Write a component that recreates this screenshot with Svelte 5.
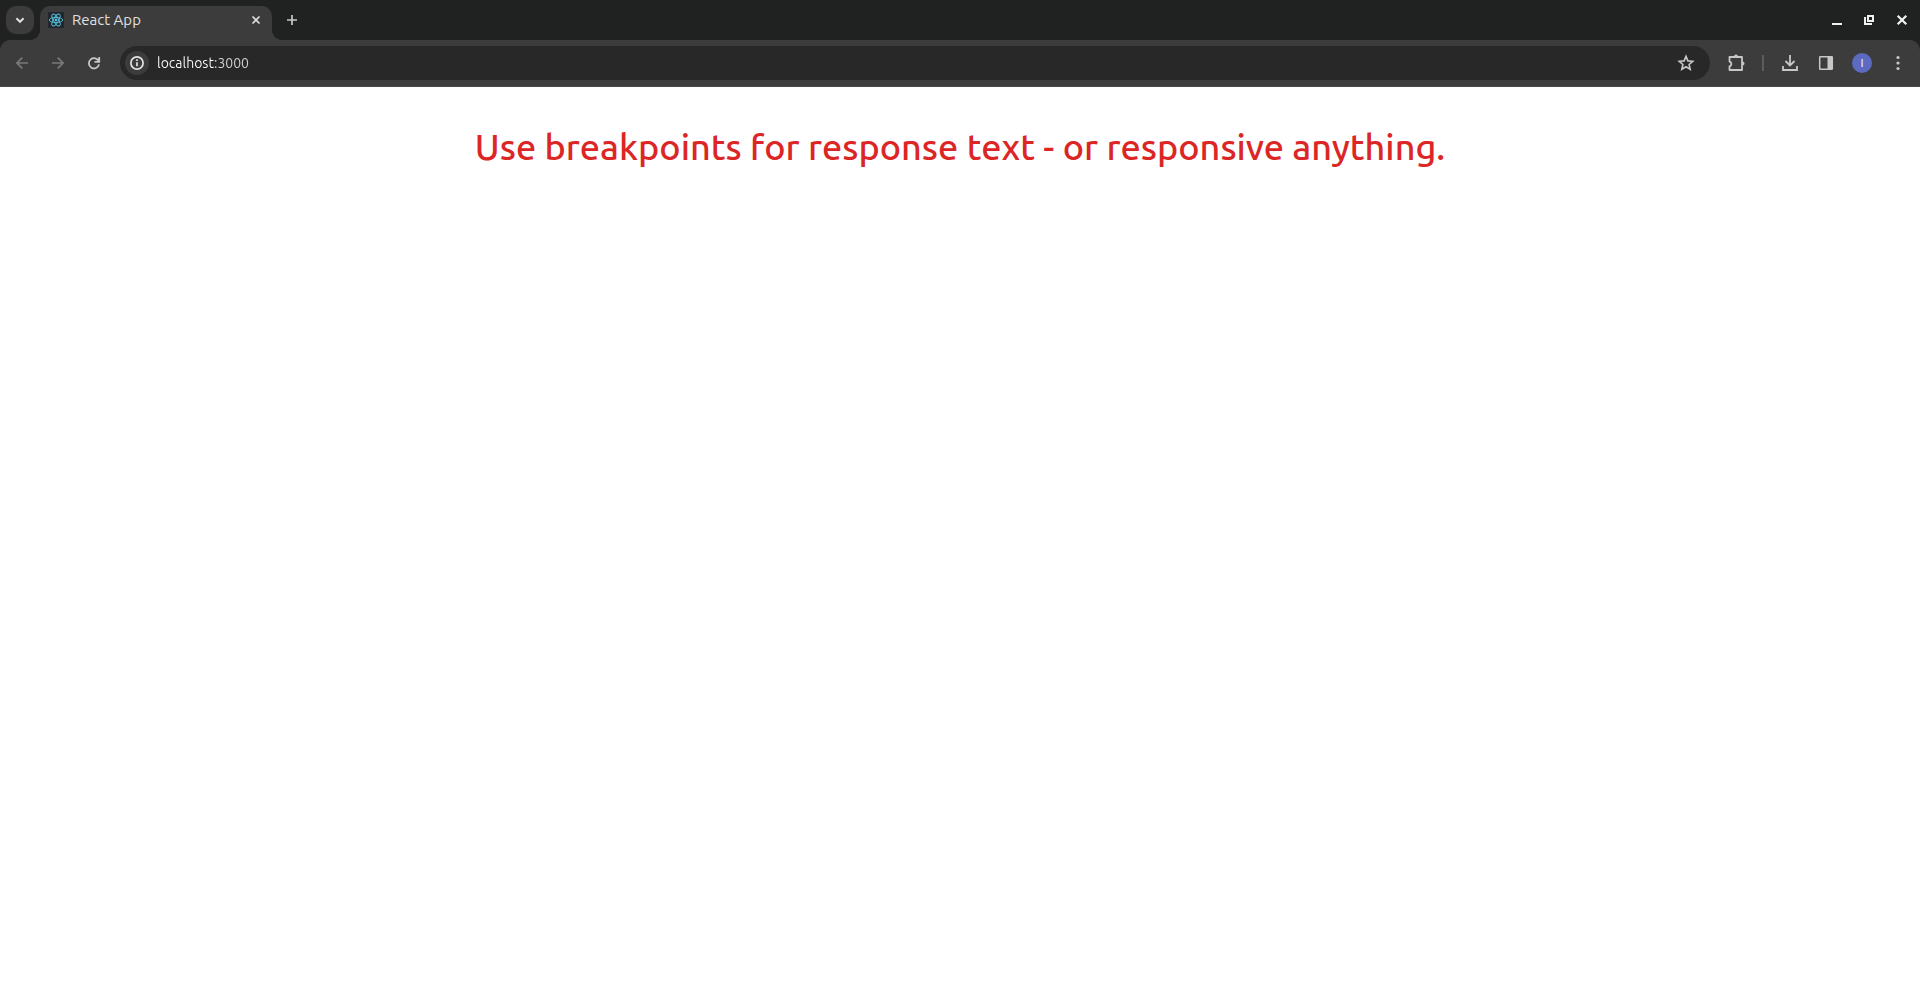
<script>
  let address = $state('localhost:3000');
</script>

<div class="browser">
  <header>
    <div class="strip">
      <button class="search" aria-label="Search tabs">
        <svg width="10" height="10" viewBox="0 0 10 10"><path d="M1.4 3.2 5 6.8 8.6 3.2" stroke-width="2" /></svg>
      </button>
      <div class="tab">
        <svg class="react" width="16" height="16" viewBox="0 0 16 16">
          <rect width="16" height="16" rx="1" fill="#20262c" />
          <g fill="none" stroke="#56bfdd" stroke-width=".9">
            <ellipse cx="8" cy="8" rx="6.7" ry="2.6" />
            <ellipse cx="8" cy="8" rx="6.7" ry="2.6" transform="rotate(60 8 8)" />
            <ellipse cx="8" cy="8" rx="6.7" ry="2.6" transform="rotate(120 8 8)" />
          </g>
          <circle cx="8" cy="8" r="1.4" fill="#56bfdd" />
        </svg>
        <span class="title">React App</span>
        <button class="close" aria-label="Close tab">
          <svg width="16" height="16" viewBox="0 0 16 16"><path d="m4.5 4.5 7 7m0-7-7 7" stroke-width="1.7" /></svg>
        </button>
      </div>
      <button class="new" aria-label="New tab">
        <svg width="16" height="16" viewBox="0 0 16 16"><path d="M8 3v10M3 8h10" stroke="#c7c7c7" stroke-width="1.7" /></svg>
      </button>
      <div class="window">
        <button aria-label="Minimize">
          <svg width="16" height="16" viewBox="0 0 16 16"><path d="M4 12h10" stroke="#f1f1f1" stroke-width="2" /></svg>
        </button>
        <button aria-label="Restore">
          <svg width="16" height="16" viewBox="0 0 16 16"><path d="M7 4h5v5H7zM4 5v7h7" stroke="#f1f1f1" stroke-width="2" /></svg>
        </button>
        <button aria-label="Close window">
          <svg width="16" height="16" viewBox="0 0 16 16"><path d="m3.7 3.7 8.6 8.6m0-8.6-8.6 8.6" stroke="#f1f1f1" stroke-width="2.2" /></svg>
        </button>
      </div>
    </div>

    <div class="toolbar">
      <button class="dim" aria-label="Back">
        <svg width="16" height="16" viewBox="0 0 16 16"><path d="M14 8H3m5.3-5.4L2.9 8l5.4 5.4" stroke-width="1.7" /></svg>
      </button>
      <button class="dim" aria-label="Forward">
        <svg width="16" height="16" viewBox="0 0 16 16"><path d="M2 8h11M7.700 2.600 13.100 8l-5.400 5.400" stroke-width="1.700" /></svg>
      </button>
      <button aria-label="Reload">
        <svg width="16" height="16" viewBox="0 0 16 16"><path d="M12.800 6.600A5.100 5.100 0 1 0 13 9.300M13.200 2v4.800H8.500" stroke-width="1.800" /></svg>
      </button>
      <div class="address">
        <button class="info" aria-label="View site information">
          <svg width="16" height="16" viewBox="0 0 16 16"><circle cx="8" cy="8" r="6.100" stroke-width="1.700" /><path d="M8 7.300v4M8 4.300v1.700" stroke-width="1.700" /></svg>
        </button>
        <input aria-label="Address and search bar" bind:value={address} />
        <button aria-label="Bookmark this tab">
          <svg width="18" height="18" viewBox="0 0 18 18"><path d="m9 2.400 1.900 4.500 4.900.4-3.700 3.200 1.100 4.800L9 12.700l-4.200 2.600 1.100-4.800-3.700-3.200 4.900-.4z" stroke-width="1.600" /></svg>
        </button>
      </div>
      <button class="extensions" aria-label="Extensions">
        <svg width="20" height="20" viewBox="0 0 20 20"><path d="M3.500 4h12.500v13h-12.500v-3.500c2.500-.6 2.500-4.400 0-5z" stroke-width="1.800" stroke-linejoin="round" /><path d="M8 3.500a2 2 0 0 1 4 0zM16.500 8.500a2 2 0 0 1 0 4z" fill="#c7c7c7" stroke="none" /></svg>
      </button>
      <span class="rule"></span>
      <button aria-label="Downloads">
        <svg width="20" height="20" viewBox="0 0 20 20"><path d="M10 2v10M5.500 8 10 12.500 14.500 8M3 13v4h14v-4" stroke-width="1.800" /></svg>
      </button>
      <button aria-label="Side panel">
        <svg width="16" height="16" viewBox="0 0 16 16"><rect x="1.700" y="1.700" width="12.600" height="12.600" rx=".7" stroke-width="1.500" /><path d="M9.500 1.500h5v13h-5z" fill="#c7c7c7" stroke="none" /></svg>
      </button>
      <button aria-label="Profile"><span class="avatar">I</span></button>
      <button aria-label="Menu">
        <svg width="16" height="16" viewBox="0 0 16 16"><g fill="#c7c7c7" stroke="none"><circle cx="8" cy="2.500" r="1.600" /><circle cx="8" cy="8" r="1.600" /><circle cx="8" cy="13.500" r="1.600" /></g></svg>
      </button>
    </div>
  </header>

  <main>
    <p>Use breakpoints for response text - or responsive anything.</p>
  </main>
</div>

<style>
  :global(body) {
    margin: 0;
    background: #fff;
  }
  .browser {
    min-height: 100vh;
    font-family: Ubuntu, "Noto Sans", sans-serif;
  }
  header {
    background: #202221;
  }
  button {
    display: flex;
    flex: none;
    align-items: center;
    justify-content: center;
    padding: 0;
    border: 0;
    background: none;
    font: inherit;
  }
  svg {
    display: block;
    flex: none;
    fill: none;
    stroke: #dedede;
  }
  .strip {
    display: flex;
    align-items: center;
    height: 40px;
    padding-left: 6px;
  }
  .search {
    width: 28px;
    height: 28px;
    border-radius: 10px;
    background: #3c3c3c;
  }
  .tab {
    position: relative;
    display: flex;
    align-items: center;
    align-self: flex-end;
    box-sizing: border-box;
    width: 232px;
    height: 34px;
    margin-left: 6px;
    padding: 0 8px 6px;
    border-radius: 10px 10px 0 0;
    background: #3c3c3c;
  }
  .tab::before,
  .tab::after {
    content: "";
    position: absolute;
    bottom: 0;
    width: 10px;
    height: 10px;
  }
  .tab::before {
    right: 100%;
    background: radial-gradient(circle at 0 0, transparent 10px, #3c3c3c 10px);
  }
  .tab::after {
    left: 100%;
    background: radial-gradient(circle at 100% 0, transparent 10px, #3c3c3c 10px);
  }
  .react {
    stroke: none;
  }
  .title {
    flex: 1;
    margin-left: 8px;
    color: #e0e0e0;
    font-size: 15px;
    line-height: 20px;
  }
  .new {
    width: 28px;
    height: 28px;
    margin-left: 6px;
  }
  .window {
    display: flex;
    gap: 17px;
    margin-left: auto;
    padding-right: 10px;
  }
  .toolbar {
    display: flex;
    align-items: center;
    gap: 2px;
    height: 46px;
    padding: 0 5px;
    border-bottom: 1px solid #484848;
    border-radius: 10px 10px 0 0;
    background: #3c3c3c;
  }
  .toolbar button {
    width: 34px;
    height: 34px;
  }
  .toolbar svg {
    stroke: #c7c7c7;
  }
  .toolbar .dim svg {
    stroke: #7a7a7a;
  }
  .address {
    display: flex;
    flex: 1;
    align-items: center;
    min-width: 0;
    height: 34px;
    margin-left: 7px;
    padding: 0 7px 0 5px;
    border-radius: 17px;
    background: #282828;
  }
  .toolbar .info {
    width: 24px;
    height: 24px;
    border-radius: 50%;
    background: #3c3c3c;
  }
  .toolbar .info svg {
    stroke: #e3e3e3;
  }
  input {
    flex: 1;
    min-width: 0;
    height: 24px;
    margin-left: 8px;
    padding: 0;
    border: 0;
    outline: 0;
    background: linear-gradient(90deg, #fff 58px, #d5d5d5 58px);
    background-clip: text;
    color: transparent;
    caret-color: #e8e8e8;
    font-family: inherit;
    font-size: 14px;
  }
  .toolbar .extensions {
    margin-left: 7px;
  }
  .rule {
    width: 2px;
    height: 16px;
    margin: 0 7px;
    background: #5c5c5c;
  }
  .avatar {
    width: 20px;
    height: 20px;
    border-radius: 50%;
    background: #5c6bc0;
    color: #e8eaf6;
    font-size: 11px;
    font-weight: 500;
    line-height: 20px;
    text-align: center;
  }
  main {
    padding: 40px 24px;
  }
  p {
    margin: 0;
    color: #dc2626;
    font-size: 36px;
    font-weight: 500;
    line-height: 40px;
    text-align: center;
  }
</style>
